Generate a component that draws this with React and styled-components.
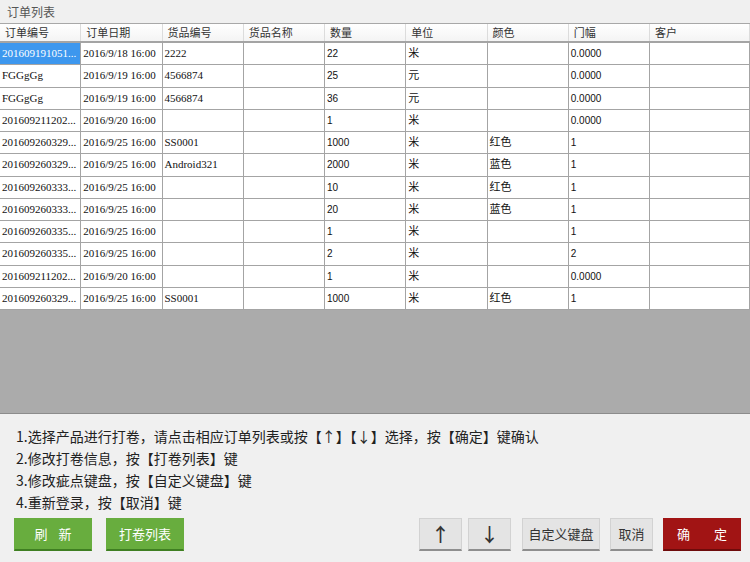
import styled, { createGlobalStyle } from "styled-components"

const GlobalStyle = createGlobalStyle`
  html, body {
    margin: 0;
    padding: 0;
    background: #f0f0f0;
  }
  * { box-sizing: border-box; }
`

const columns = [
  { title: "订单编号" },
  { title: "订单日期" },
  { title: "货品编号" },
  { title: "货品名称" },
  { title: "数量", sans: true },
  { title: "单位" },
  { title: "颜色" },
  { title: "门幅", sans: true },
  { title: "客户" },
]

const rows = [
  ["201609191051...", "2016/9/18 16:00", "2222", "", "22", "米", "", "0.0000", ""],
  ["FGGgGg", "2016/9/19 16:00", "4566874", "", "25", "元", "", "0.0000", ""],
  ["FGGgGg", "2016/9/19 16:00", "4566874", "", "36", "元", "", "0.0000", ""],
  ["201609211202...", "2016/9/20 16:00", "", "", "1", "米", "", "0.0000", ""],
  ["201609260329...", "2016/9/25 16:00", "SS0001", "", "1000", "米", "红色", "1", ""],
  ["201609260329...", "2016/9/25 16:00", "Android321", "", "2000", "米", "蓝色", "1", ""],
  ["201609260333...", "2016/9/25 16:00", "", "", "10", "米", "红色", "1", ""],
  ["201609260333...", "2016/9/25 16:00", "", "", "20", "米", "蓝色", "1", ""],
  ["201609260335...", "2016/9/25 16:00", "", "", "1", "米", "", "1", ""],
  ["201609260335...", "2016/9/25 16:00", "", "", "2", "米", "", "2", ""],
  ["201609211202...", "2016/9/20 16:00", "", "", "1", "米", "", "0.0000", ""],
  ["201609260329...", "2016/9/25 16:00", "SS0001", "", "1000", "米", "红色", "1", ""],
]

const tips = [
  "1.选择产品进行打卷，请点击相应订单列表或按【↑】【↓】选择，按【确定】键确认",
  "2.修改打卷信息，按【打卷列表】键",
  "3.修改疵点键盘，按【自定义键盘】键",
  "4.重新登录，按【取消】键",
]

// splits a label into single glyphs so wide-spaced labels stay centred
const Spread = ({ text }) => text.split("").map((ch, i) => <span key={i}>{ch}</span>)

const App = () => {
  return (
    <>
      <GlobalStyle />
      <Screen>
        <Title>订单列表</Title>
        <Table>
          <HeaderRow>
            {columns.map(col => (
              <HeadCell key={col.title}>{col.title}</HeadCell>
            ))}
          </HeaderRow>
          {rows.map((row, r) => (
            <Row key={r}>
              {row.map((value, c) => (
                <Cell key={c} $sans={columns[c].sans} $selected={r === 0 && c === 0}>
                  {value}
                </Cell>
              ))}
            </Row>
          ))}
        </Table>
        <Empty />
        <Bottom>
          <Tips>
            {tips.map(t => (
              <p key={t}>{t}</p>
            ))}
          </Tips>
          <Toolbar>
            <Group>
              <Button $variant="green" $gap="11px"><Spread text="刷新" /></Button>
              <Button $variant="green" $ml="14px">打卷列表</Button>
            </Group>
            <Group>
              <Button $narrow $arrow>↑</Button>
              <Button $narrow $arrow $ml="6px">↓</Button>
              <Button $ml="11px">自定义键盘</Button>
              <Button $narrow $ml="10px">取消</Button>
              <Button $variant="red" $ml="10px" $gap="24px"><Spread text="确定" /></Button>
            </Group>
          </Toolbar>
        </Bottom>
      </Screen>
    </>
  )
}

const Screen = styled.div`
  width: 750px;
  height: 562px;
  display: flex;
  flex-direction: column;
  background: #f0f0f0;
  font-family: "Noto Sans CJK SC", "Noto Sans", sans-serif;
  overflow: hidden;
`

const Title = styled.div`
  height: 24px;
  padding: 4px 0 0 7px;
  font-size: 12px;
  line-height: 16px;
  color: #555;
  border-bottom: 1px solid #a8a8a8;
`

const Table = styled.div`
  display: flex;
  flex-direction: column;
  background: #ffffff;
`

const gridCols = `repeat(8, 81.25px) 1fr`

const HeaderRow = styled.div`
  display: grid;
  grid-template-columns: ${gridCols};
  height: 19px;
  background: linear-gradient(#ffffff, #f4f4f4);
  border-bottom: 2px solid #a4a4a4;
`

const HeadCell = styled.div`
  padding: 0 0 0 5px;
  font-size: 11px;
  line-height: 17px;
  color: #333;
  border-right: 1px solid #dcdcdc;
  white-space: nowrap;
`

const Row = styled.div`
  display: grid;
  grid-template-columns: ${gridCols};
  height: 22.25px;
  border-bottom: 1px solid #a4a4a4;
`

const Cell = styled.div`
  padding: 0 0 0 2px;
  font-family: ${p => (p.$sans ? `"Liberation Sans", "Noto Sans CJK SC"` : `"Liberation Serif", "Noto Sans CJK SC"`)}, serif;
  font-size: ${p => (p.$sans ? "10px" : "11px")};
  line-height: 21px;
  color: ${p => (p.$selected ? "#ffffff" : "#111")};
  background: ${p => (p.$selected ? "#3d97ee" : "transparent")};
  border-right: 1px solid #a4a4a4;
  white-space: nowrap;
  overflow: hidden;
`

const Empty = styled.div`
  flex: 1;
  background: #ababab;
  border-bottom: 1px solid #8c8c8c;
`

const Bottom = styled.div`
  height: 148px;
  padding: 11px 9px 10px 14px;
  display: flex;
  flex-direction: column;
`

const Tips = styled.div`
  padding-left: 2px;

  p {
    margin: 0;
    font-size: 14px;
    line-height: 22px;
    color: #222;
    white-space: nowrap;
  }
`

const Toolbar = styled.div`
  margin-top: 5px;
  display: flex;
  justify-content: space-between;
`

const Group = styled.div`
  display: flex;
`

const palette = {
  green: { bg: "#68ad3e", edge: "#3f7f22", color: "#ffffff", side: "#68ad3e" },
  red: { bg: "#a11414", edge: "#6e0b0b", color: "#ffffff", side: "#a11414" },
  gray: { bg: "#e4e4e4", edge: "#8e8e8e", color: "#333333", side: "#d2d2d2" },
}

const Button = styled.button`
  width: ${p => (p.$narrow ? "43px" : "78px")};
  height: 33px;
  margin-left: ${p => p.$ml || "0"};
  padding: 0;
  display: flex;
  align-items: center;
  justify-content: center;
  gap: ${p => p.$gap || "0"};
  border: 1px solid ${p => palette[p.$variant || "gray"].side};
  border-bottom: 2px solid ${p => palette[p.$variant || "gray"].edge};
  background: ${p => palette[p.$variant || "gray"].bg};
  color: ${p => palette[p.$variant || "gray"].color};
  font-family: "Noto Sans CJK SC", "Noto Sans", sans-serif;
  font-size: ${p => (p.$arrow ? "19px" : "13px")};
  font-weight: ${p => (p.$arrow ? 500 : 400)};
  line-height: 30px;
`

export default App
